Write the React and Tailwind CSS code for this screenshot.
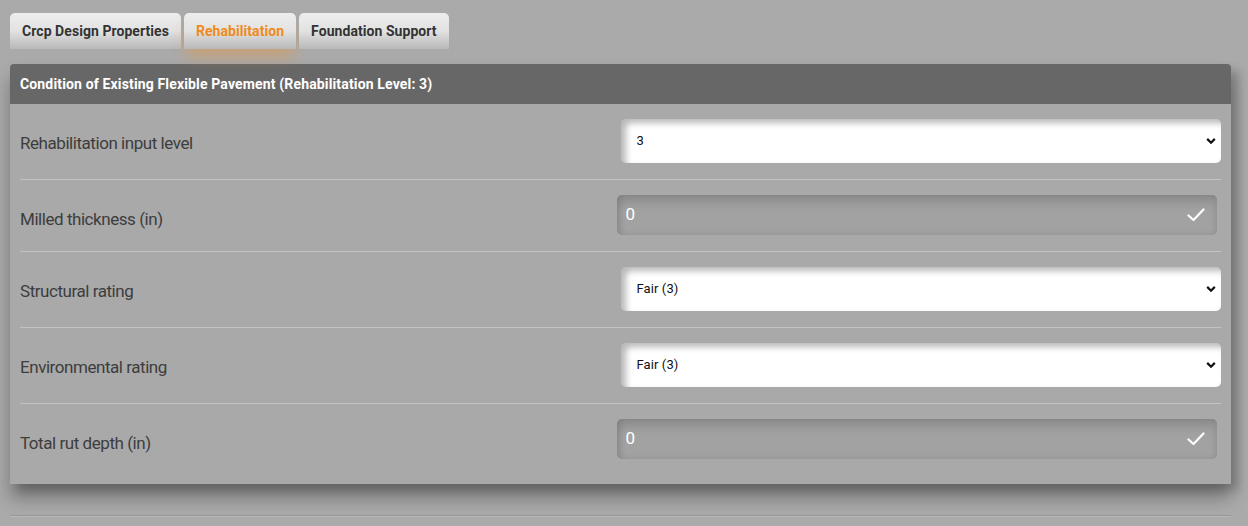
import React from "react";

const font = { fontFamily: "Roboto, 'Liberation Sans', sans-serif" };

function Chevron() {
  return (
    <svg width="10" height="7" viewBox="0 0 10 7" className="absolute right-[5px] top-1/2 -translate-y-1/2">
      <path d="M1.2 1.4 L5 5.2 L8.8 1.4" fill="none" stroke="#111" strokeWidth="2.2" />
    </svg>
  );
}

function Check() {
  return (
    <svg width="20" height="16" viewBox="0 0 20 16" className="absolute right-[11px] top-1/2 -translate-y-1/2">
      <path d="M2.5 8.5 L7.5 13 L17.5 2.5" fill="none" stroke="#fff" strokeWidth="2.2" strokeLinecap="round" strokeLinejoin="round" />
    </svg>
  );
}

function SelectBox({ value }) {
  return (
    <div className="relative h-[44px] w-full rounded-[5px] bg-white shadow-[inset_5px_4px_6px_rgba(0,0,0,0.28)] flex items-center pl-[16px] text-[13px] text-[#111] tracking-[0.1px]">
      {value}
      <Chevron />
    </div>
  );
}

function DisabledInput({ value }) {
  return (
    <div className="relative h-[40px] -ml-[4px] mr-[4px] rounded-[5px] bg-[#a2a2a2] shadow-[inset_0_8px_10px_rgba(0,0,0,0.12),inset_3px_0_6px_rgba(0,0,0,0.1)] flex items-center pl-[9px] text-[17px] text-white">
      {value}
      <Check />
    </div>
  );
}

function Row({ label, children, last }) {
  return (
    <div className={"grid grid-cols-2 " + (last ? "" : "border-b border-[#c2c2c2]")}>
      <div className="pt-[28px] leading-[22px] text-[17px] tracking-[-0.45px] text-[#3d3d3d]">{label}</div>
      <div className="pt-[15px] pb-[16px]">{children}</div>
    </div>
  );
}

function Tab({ children, active }) {
  return (
    <div
      className={
        "h-[36px] px-[12px] pt-[1px] flex items-center rounded-t-[5px] text-[14px] tracking-[0.06px] font-bold bg-gradient-to-b from-[#ededed] via-[#e2e2e2] to-[#b8b8b8] " +
        (active
          ? "text-[#f08a1c] shadow-[0_10px_14px_-2px_rgba(235,150,60,0.45)]"
          : "text-[#333]")
      }
    >
      {children}
    </div>
  );
}

export default function App() {
  return (
    <div className="w-[1248px] h-[526px] bg-[#aaaaaa] overflow-hidden" style={font}>
      <div className="pt-[13px] pl-[10px] flex gap-[3px]">
        <Tab>Crcp Design Properties</Tab>
        <Tab active>Rehabilitation</Tab>
        <Tab>Foundation Support</Tab>
      </div>
      <div className="ml-[10px] mr-[17px] mt-[15px] rounded-t-[4px] bg-[#a9a9a9] shadow-[0_14px_18px_rgba(0,0,0,0.3),8px_6px_10px_rgba(0,0,0,0.18)]">
        <div className="h-[40px] rounded-t-[4px] bg-[#676767] flex items-center px-[10px] text-[14px] tracking-[0.15px] font-bold text-white">
          Condition of Existing Flexible Pavement (Rehabilitation Level: 3)
        </div>
        <div className="px-[10px] pb-[9px]">
          <Row label="Rehabilitation input level">
            <SelectBox value="3" />
          </Row>
          <Row label="Milled thickness (in)">
            <DisabledInput value="0" />
          </Row>
          <Row label="Structural rating">
            <SelectBox value="Fair (3)" />
          </Row>
          <Row label="Environmental rating">
            <SelectBox value="Fair (3)" />
          </Row>
          <Row label="Total rut depth (in)" last>
            <DisabledInput value="0" />
          </Row>
        </div>
      </div>
      <div className="ml-[10px] mr-[17px] mt-[31px] border-t border-[#969696] border-b border-b-[#b8b8b8] h-0"></div>
    </div>
  );
}
